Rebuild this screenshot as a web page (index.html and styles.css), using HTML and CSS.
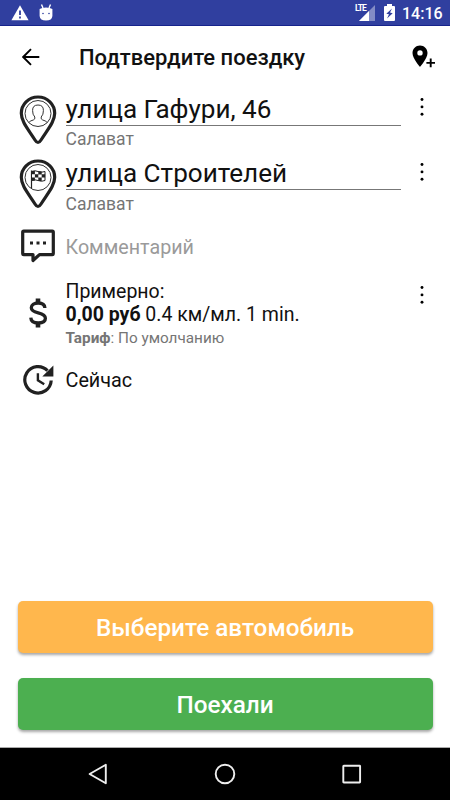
FILE: index.html
```html
<!DOCTYPE html>
<html lang="ru">

<head>
  <meta charset="UTF-8">
  <meta name="viewport" content="width=device-width, initial-scale=1.0">
  <title>Подтвердите поездку</title>
  <link rel="stylesheet" href="styles.css">
</head>

<body>
  <div class="screen">
    <!-- status bar -->
    <div class="status">
      <svg class="warn" width="18" height="16" viewBox="0 0 18 16">
        <path d="M9 0.3L17.6 15.3H0.4z" fill="#fff"/>
        <path d="M9 5.5v4.6M9 11.5v2" stroke="#303f9f" stroke-width="1.8"/>
      </svg>
      <svg class="robot" width="14" height="17" viewBox="0 0 14 17">
        <path d="M2.5 0.5L4 4M11.5 0.5L10 4" stroke="#fff" stroke-width="1.4"/>
        <path d="M0.6 5Q3 3.4 7 3.4T13.4 5V12Q13 16.500 7 16.500T0.6 12z" fill="#fff"/>
        <circle cx="4" cy="9.500" r="0.8" fill="#303f9f"/>
        <circle cx="10" cy="9.500" r="0.8" fill="#303f9f"/>
      </svg>
      <div class="signal">
        <span class="lte">LTE</span>
        <svg width="16" height="16" viewBox="0 0 16 16">
          <path d="M0 16L16 0V16z" fill="#838cc5"/>
          <path d="M0 16L10 6V16z" fill="#fff"/>
        </svg>
      </div>
      <svg class="battery" width="11" height="17" viewBox="0 0 11 17">
        <path d="M3 0h5v2h2q1 0 1 1v13q0 1-1 1H1q-1 0-1-1V3q0-1 1-1h2z" fill="#fff"/>
        <path d="M8 4.5L2.3 9.8 5 10.3 3 14.5 8.7 9.2 6 8.6z" fill="#303f9f"/>
      </svg>
      <span class="time">14:16</span>
    </div>

    <!-- header -->
    <div class="header">
      <svg class="back" width="18" height="18" viewBox="0 0 18 18">
        <path d="M17.3 9H1.5M9 1.2L1.2 9L9 16.8" fill="none" stroke="#000" stroke-width="1.9"/>
      </svg>
      <h1>Подтвердите поездку</h1>
      <svg class="add" width="24" height="23" viewBox="0 0 24 23">
        <path d="M8 0.5C3.8 0.5 0.5 3.7 0.5 8C0.5 13.5 8 22 8 22S15.500 13.500 15.500 8C15.500 3.700 12.200 0.500 8 0.500zM8 5.200a2.700 2.700 0 1 1 0 5.400a2.700 2.700 0 0 1 0-5.400z" fill="#000" fill-rule="evenodd"/>
        <path d="M18.700 13.600v8.600M14.400 17.900h8.600" stroke="#000" stroke-width="1.9"/>
      </svg>
    </div>

    <!-- route and order details -->
    <div class="list">
      <div class="row address">
        <svg class="icon" width="38" height="50" viewBox="0 0 38 50">
          <path d="M19 2C9.500 2 2.300 9.300 2.300 18.300C2.300 26.500 9 34 16 45Q19 50 22 45C29 34 35.700 26.500 35.700 18.300C35.700 9.300 28.500 2 19 2z" fill="#fff" stroke="#212121" stroke-width="3.200"/>
          <circle cx="19" cy="18.500" r="13" fill="none" stroke="#333" stroke-width="1"/>
          <path d="M9.800 27.700Q10.500 25.800 14.300 25Q16.400 24.300 15.800 22Q13.500 19.700 13.600 15.500Q13.500 10 19 10T24.400 15.500Q24.500 19.700 22.200 22Q21.600 24.300 23.700 25Q27.500 25.800 28.200 27.700" fill="none" stroke="#333" stroke-width="1"/>
        </svg>
        <div class="text">
          <div class="street">улица Гафури, 46</div>
          <div class="city">Салават</div>
        </div>
        <svg class="dots" width="4" height="20" viewBox="0 0 4 20"><circle cx="2" cy="2.500" r="1.450"/><circle cx="2" cy="9.900" r="1.450"/><circle cx="2" cy="17.200" r="1.450"/></svg>
      </div>
      <div class="row address last">
        <svg class="icon" width="38" height="50" viewBox="0 0 38 50">
          <path d="M19 2C9.500 2 2.300 9.300 2.300 18.300C2.300 26.500 9 34 16 45Q19 50 22 45C29 34 35.700 26.500 35.700 18.300C35.700 9.300 28.500 2 19 2z" fill="#fff" stroke="#212121" stroke-width="3.200"/>
          <circle cx="19" cy="18.500" r="13" fill="none" stroke="#333" stroke-width="1"/>
          <path d="M12.500 11.500V29" stroke="#222" stroke-width="1.200"/>
          <path d="M12.500 12.500Q16 11 19 12.500T26 12.500V21.500Q22.500 23 19 21.500T12.500 21.500z" fill="#fff" stroke="#222" stroke-width="1"/>
          <path d="M12.500 12h3.400v3.300h-3.400zM19.300 12.300h3.400v3.300h-3.400zM15.900 15.300h3.400v3.300h-3.400zM22.700 15.300h3.400v3.300h-3.400zM12.500 18.500h3.400v3.300h-3.400zM19.300 18.600h3.400v3.300h-3.400z" fill="#222"/>
        </svg>
        <div class="text">
          <div class="street">улица Строителей</div>
          <div class="city">Салават</div>
        </div>
        <svg class="dots" width="4" height="20" viewBox="0 0 4 20"><circle cx="2" cy="2.500" r="1.450"/><circle cx="2" cy="9.900" r="1.450"/><circle cx="2" cy="17.200" r="1.450"/></svg>
      </div>
      <div class="row comment">
        <svg class="icon" width="38" height="34" viewBox="0 0 38 34">
          <path d="M4.700 2.200H33.300Q34.300 2.200 34.300 3.200V24.600Q34.300 25.600 33.300 25.600H20.500L14 31.500V25.600H4.700Q3.700 25.600 3.700 24.600V3.200Q3.700 2.200 4.700 2.200z" fill="none" stroke="#212121" stroke-width="3.200" stroke-linejoin="round"/>
          <path d="M11 12.500h3v3h-3zM17.500 12.500h3v3h-3zM24 12.500h3v3h-3z" fill="#212121"/>
        </svg>
        <div class="text">Комментарий</div>
      </div>
      <div class="row price">
        <svg class="icon" width="38" height="30" viewBox="0 0 38 30">
          <path d="M19 0.500V6M19 24.500V29.500" stroke="#212121" stroke-width="4.600"/>
          <path d="M25.900 10C25.700 6.500 23 5 19.200 5C15 5 12.300 6.900 12.300 9.800C12.300 12.800 15 13.900 19.200 14.900C23.700 16 26.400 17.200 26.400 20.300C26.400 23.300 23.600 25 19.300 25C14.800 25 12 23.200 11.800 19.600" fill="none" stroke="#212121" stroke-width="3.300"/>
        </svg>
        <div class="text">
          <div>Примерно:</div>
          <div><b>0,00 руб</b> 0.4 км/мл. 1 min.</div>
          <div class="tariff"><b>Тариф</b>: По умолчанию</div>
        </div>
        <svg class="dots" width="4" height="20" viewBox="0 0 4 20"><circle cx="2" cy="2.500" r="1.450"/><circle cx="2" cy="9.900" r="1.450"/><circle cx="2" cy="17.200" r="1.450"/></svg>
      </div>
      <div class="row when">
        <svg class="icon" width="38" height="32" viewBox="0 0 38 32">
          <path d="M28.500 6.600A13.200 13.200 0 1 0 32.200 16.500" fill="none" stroke="#212121" stroke-width="3.200"/>
          <path d="M34.400 1.500V12.600H23.300z" fill="#212121"/>
          <path d="M18.900 9.300V16.300L25.200 20.200" fill="none" stroke="#212121" stroke-width="2.400"/>
        </svg>
        <div class="text">Сейчас</div>
      </div>
    </div>

    <div class="buttons">
      <button class="btn car">Выберите автомобиль</button>
      <button class="btn go">Поехали</button>
    </div>

    <!-- navigation bar -->
    <div class="nav">
      <svg width="22" height="22" viewBox="0 0 22 22"><path d="M18.800 1.700V20.300L2.600 11z" fill="none" stroke="#eee" stroke-width="1.900" stroke-linejoin="round"/></svg>
      <svg width="22" height="22" viewBox="0 0 22 22"><circle cx="11" cy="11" r="9.300" fill="none" stroke="#eee" stroke-width="1.900"/></svg>
      <svg width="22" height="22" viewBox="0 0 22 22"><rect x="2.300" y="2.700" width="16.800" height="16.800" rx="0.500" fill="none" stroke="#eee" stroke-width="1.900"/></svg>
    </div>
  </div>
</body>

</html>
```
FILE: styles.css
```css
* {
  margin: 0;
  padding: 0;
  box-sizing: border-box;
}

body {
  font-family: Roboto, "Noto Sans", sans-serif;
  color: #111;
  background-color: #fff;
}

svg {
  display: block;
  flex-shrink: 0;
}

.screen {
  display: flex;
  flex-direction: column;
  width: 450px;
  height: 800px;
  overflow: hidden;
}

/* status bar */
.status {
  display: flex;
  align-items: center;
  height: 26px;
  padding: 0 8px 0 11px;
  background-color: #303f9f;
  border-bottom: 1px solid #16238c;
  color: #fff;
}

.robot {
  margin-left: 10px;
  margin-top: -1px;
}

.signal {
  display: flex;
  margin-left: auto;
}

.signal svg {
  margin-left: -16px;
  margin-top: 1px;
}

.lte {
  width: 20px;
  height: 16px;
  font-size: 8.5px;
  line-height: 8px;
  font-weight: 700;
  letter-spacing: -0.9px;
}

.battery {
  margin-left: 9px;
}

.time {
  width: 40px;
  margin-left: 7px;
  margin-top: 2px;
  font-size: 16px;
  line-height: 20px;
  font-weight: 500;
  white-space: nowrap;
}

/* header */
.header {
  display: flex;
  align-items: center;
  height: 64px;
  padding: 0 14px 0 22px;
}

.back {
  margin-top: -2px;
}

.header h1 {
  flex: 1;
  margin-left: 39px;
  font-size: 22px;
  line-height: 28px;
  font-weight: 500;
  color: #111;
}

.add {
  margin-top: -3px;
}

/* order details */
.list {
  flex: 1;
  padding: 4px 26px 0 19px;
}

.row {
  display: flex;
  align-items: center;
}

.row .text {
  width: 335.5px;
  margin-left: 8.5px;
  white-space: nowrap;
}

.dots {
  margin-left: auto;
  fill: #000;
}

.address {
  align-items: flex-start;
  height: 64px;
}

.address .icon {
  margin-top: 0.6px;
}

.address.last .icon {
  margin-top: 1px;
}

.address .dots {
  margin-top: 3px;
}

.address.last .dots {
  margin-top: 3.5px;
}

.street {
  height: 32px;
  border-bottom: 1px solid #777;
  font-size: 26.1px;
  line-height: 30px;
}

.city {
  font-size: 17.5px;
  line-height: 27px;
  color: #757575;
}

.address.last .city {
  line-height: 28px;
}

.comment {
  height: 50px;
}

.comment .icon {
  margin-top: -2px;
}

.comment .text {
  font-size: 19.7px;
  color: #9a9a9a;
}

.price {
  height: 70px;
  margin-top: 9px;
  font-size: 19.5px;
  line-height: 23px;
}

.price .icon {
  margin-top: -7px;
}

.price .text {
  margin-top: -2px;
}

.price .dots {
  align-self: flex-start;
  margin-top: 4px;
}

.tariff {
  font-size: 15.3px;
  line-height: 24px;
  color: #757575;
}

.when {
  height: 50px;
  margin-top: 4px;
  font-size: 19.8px;
}

/* buttons */
.buttons {
  display: flex;
  flex-direction: column;
  gap: 25px;
  padding: 0 17.5px 17px;
}

.btn {
  height: 52px;
  border: 0;
  border-radius: 5px;
  box-shadow: 0 2px 3px rgba(0, 0, 0, 0.35);
  font-family: inherit;
  font-size: 24.3px;
  line-height: 54px;
  font-weight: 500;
  color: #fff;
}

.car {
  background-color: #ffb74d;
}

.go {
  background-color: #4caf50;
}

/* navigation bar */
.nav {
  display: flex;
  align-items: center;
  justify-content: center;
  gap: 105px;
  height: 53px;
  border-top: 1px solid #aaa;
  background-color: #000;
}
```
